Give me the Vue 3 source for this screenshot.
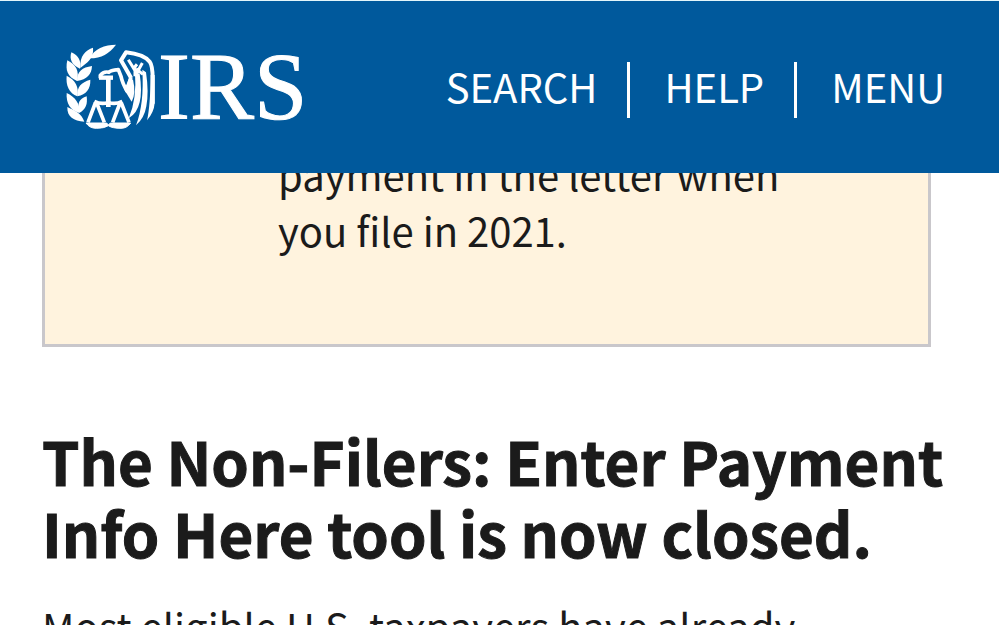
<template>
  <div class="page">
    <header class="site-header">
      <a class="brand" href="#" aria-label="IRS home">
        <svg class="brand-eagle" viewBox="30 27 270 258" aria-hidden="true">
          <!-- olive branch -->
          <g fill="#fff">
            <path d="M183 29 C150 29 116 42 104 70 C140 70 162 56 183 29Z" />
            <path d="M114 38 C92 45 74 62 76 99 L92 86 C108 74 116 60 114 38Z" />
            <path d="M49 52 C42 74 52 92 75 101 C80 80 70 60 49 52Z" />
            <path d="M37 76 C30 106 38 126 66 138 C74 108 62 88 37 76Z" />
            <path d="M111 93 C82 97 65 110 66 138 C96 134 110 118 111 93Z" />
            <path d="M35 122 C32 152 42 174 67 184 C73 156 60 134 35 122Z" />
            <path d="M106 134 C78 142 65 156 67 184 C94 178 107 162 106 134Z" />
            <path d="M35 174 C33 206 46 226 73 234 C76 206 60 186 35 174Z" />
            <path d="M95 184 C73 190 65 206 73 234 C93 222 98 208 95 184Z" />
            <path d="M37 216 C36 246 56 258 88 260 C80 236 62 228 37 216Z" />
          </g>
          <!-- head, body and scales -->
          <g fill="none" stroke="#fff" stroke-width="11" stroke-linejoin="round">
            <path d="M136 130 V121 Q146 108 162 112 Q166 106 190 104 L198 124 Q202 144 216 168 L228 126" />
            <path d="M132 128 H174" stroke-width="13" />
            <path d="M160 128 V216" stroke-width="14" />
            <path d="M118 199 Q140 210 160 202 Q180 210 202 199" />
            <path d="M121 204 L99 262 M125 204 L148 262 M195 204 L173 262 M199 204 L222 262" />
            <path d="M93 264 H155 L160 270 L166 264 H227 Q216 280 198 280 Q172 280 160 272 Q148 280 124 280 Q104 280 93 264Z" fill="#fff" stroke-width="3" />
          </g>
          <!-- wing -->
          <path d="M228 128 L198 76 L213 52 Q266 58 284 80 Q293 92 293 130 V206" fill="none" stroke="#fff" stroke-width="12" stroke-linejoin="round" />
          <path d="M220 74 L236 100 L246 88 M240 96 V124 M262 84 L240 124 M244 102 L264 118" fill="none" stroke="#fff" stroke-width="9" />
          <g fill="#fff">
            <path d="M287 120 H299 V204 Q297 232 276 256 Q286 214 287 120Z" />
            <path d="M262 104 L273 112 Q282 172 274 214 Q268 250 243 271 Q268 206 262 104Z" />
            <path d="M240 112 L254 116 Q262 170 254 202 Q246 236 221 250 Q246 194 240 112Z" />
            <path d="M222 130 L234 134 Q244 174 230 200 L208 164Z" />
          </g>
        </svg>
        <span class="brand-name">IRS</span>
      </a>
      <nav class="site-nav" aria-label="Main">
        <button v-for="item in navItems" :key="item" type="button" class="nav-item">{{ item }}</button>
      </nav>
    </header>

    <main class="content">
      <section class="notice">
        <p>payment in the letter when you file in 2021.</p>
      </section>
      <h2>The Non-Filers: Enter Payment Info Here tool is now closed.</h2>
      <p>Most eligible U.S. taxpayers have already</p>
    </main>
  </div>
</template>

<script setup>
const navItems = ['SEARCH', 'HELP', 'MENU'];
</script>

<style>
body {
  margin: 0;
  background: #fff;
}
</style>

<style scoped>
.page {
  height: 100vh;
  overflow: hidden;
  color: #1b1b1b;
  font-family: "Noto Sans CJK SC", "Noto Sans", sans-serif;
  font-size: 40px;
  line-height: 56px;
}

.site-header {
  position: fixed;
  top: 0;
  left: 0;
  right: 0;
  z-index: 1;
  display: flex;
  align-items: center;
  justify-content: space-between;
  box-sizing: border-box;
  height: 173px;
  padding: 5px 54px 0 65px;
  border-top: 1px solid #e2f6fb;
  background: #00599c;
}

.brand {
  display: flex;
  align-items: center;
  gap: 3px;
  padding-bottom: 6px;
  color: #fff;
  text-decoration: none;
}

.brand-eagle {
  width: 90px;
  height: 86px;
}

.brand-name {
  font-family: "Liberation Serif", serif;
  font-size: 96px;
  line-height: 86px;
  -webkit-text-stroke: 1px #fff;
}

.site-nav {
  display: flex;
}

.nav-item {
  padding: 0 30px 8px 34px;
  border: 0;
  border-left: 3px solid #fff;
  background: none;
  color: #fff;
  font: inherit;
  line-height: 48px;
  cursor: pointer;
}

.nav-item:first-child {
  border-left: 0;
}

.nav-item:last-child {
  padding-right: 0;
}

.content {
  padding: 0 42px;
}

.notice {
  margin-right: 26px;
  padding: 146px 120px 86px 233px;
  border: 3px solid #c9c7cb;
  border-top: 0;
  background: #fff3de;
}

.content p {
  margin: 0;
}

.content h2 {
  margin: 77px 0 30px;
  font-size: 60px;
  line-height: 72px;
  -webkit-text-stroke: 1px #1b1b1b;
}
</style>
